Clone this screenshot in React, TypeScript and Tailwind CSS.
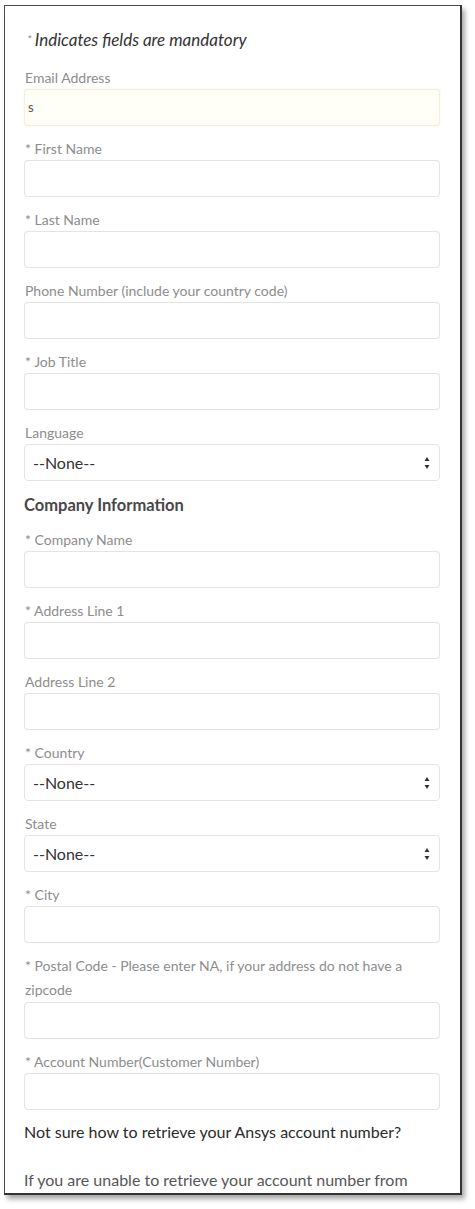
import React from "react";

const font = { fontFamily: "Lato, 'Open Sans', 'Liberation Sans', sans-serif" };

function Label({ children, req }: { children: string; req?: boolean }) {
  return (
    <div className="h-[22px] leading-[22px] text-[14px] text-[#8d8d8d] pl-[1px]">
      {req ? "* " + children : children}
    </div>
  );
}

function Input({ value, email }: { value?: string; email?: boolean }) {
  return (
    <div
      className={
        "h-[37px] rounded-[4px] border flex items-center px-[3px] text-[13px] text-[#555] " +
        (email
          ? "bg-[#fffef7] border-[#f2efdc] shadow-[0_0_2px_rgba(235,228,185,0.5)]"
          : "bg-white border-[#e4e4e4] shadow-[0_0_1px_rgba(0,0,0,0.06)]")
      }
    >
      {value}
    </div>
  );
}

function Select() {
  return (
    <div className="h-[37px] rounded-[4px] border border-[#e4e4e4] bg-white flex items-center justify-between pl-[8px] pr-[9px]">
      <span className="text-[16px] text-[#333]">--None--</span>
      <svg width="6" height="14" viewBox="0 0 6 14">
        <polygon points="3,1 5.5,5 0.5,5" fill="#333" />
        <polygon points="0.5,9 5.5,9 3,13" fill="#333" />
      </svg>
    </div>
  );
}

function Field({ label, req, children, className }: { label: string; req?: boolean; children: React.ReactNode; className?: string }) {
  return (
    <div className={"flex flex-col " + (className ?? "mt-[12px]")}>
      <Label req={req}>{label}</Label>
      {children}
    </div>
  );
}

export default function App() {
  return (
    <div className="w-[475px] h-[1209px] bg-white pt-[5px] pl-[4px]" style={font}>
      <div className="w-[458px] h-[1190px] overflow-hidden bg-white border border-[#4a4a4a] border-r-2 border-b-2 border-r-[#333] border-b-[#333] shadow-[3px_4px_5px_rgba(0,0,0,0.35)] pl-[19px] pr-[20px] pt-[24px]">
        <div className="h-[20px] leading-[20px] text-[17px] italic text-[#333] pl-[3px]">
          <span className="text-[#888] mr-[3px] text-[12px] align-top">*</span>
          Indicates fields are mandatory
        </div>
        <Field label="Email Address" className="mt-[17px]">
          <Input value="s" email />
        </Field>
        <Field label="First Name" req>
          <Input />
        </Field>
        <Field label="Last Name" req>
          <Input />
        </Field>
        <Field label="Phone Number (include your country code)">
          <Input />
        </Field>
        <Field label="Job Title" req>
          <Input />
        </Field>
        <Field label="Language">
          <Select />
        </Field>
        <div className="mt-[12px] h-[24px] leading-[24px] text-[16.5px] font-bold text-[#484848]">
          Company Information
        </div>
        <Field label="Company Name" req>
          <Input />
        </Field>
        <Field label="Address Line 1" req>
          <Input />
        </Field>
        <Field label="Address Line 2">
          <Input />
        </Field>
        <Field label="Country" req>
          <Select />
        </Field>
        <Field label="State">
          <Select />
        </Field>
        <Field label="City" req>
          <Input />
        </Field>
        <div className="flex flex-col mt-[11px]">
          <div className="leading-[24px] text-[14px] text-[#8d8d8d] pl-[1px]">
            * Postal Code - Please enter NA, if your address do not have a zipcode
          </div>
          <Input />
        </div>
        <Field label="Account Number(Customer Number)" req>
          <Input />
        </Field>
        <div className="mt-[10px] h-[24px] leading-[24px] text-[16px] text-[#2a2a2a]">
          Not sure how to retrieve your Ansys account number?
        </div>
        <div className="mt-[24px] h-[24px] leading-[24px] text-[16px] text-[#575757]">
          If you are unable to retrieve your account number from
        </div>
      </div>
    </div>
  );
}
